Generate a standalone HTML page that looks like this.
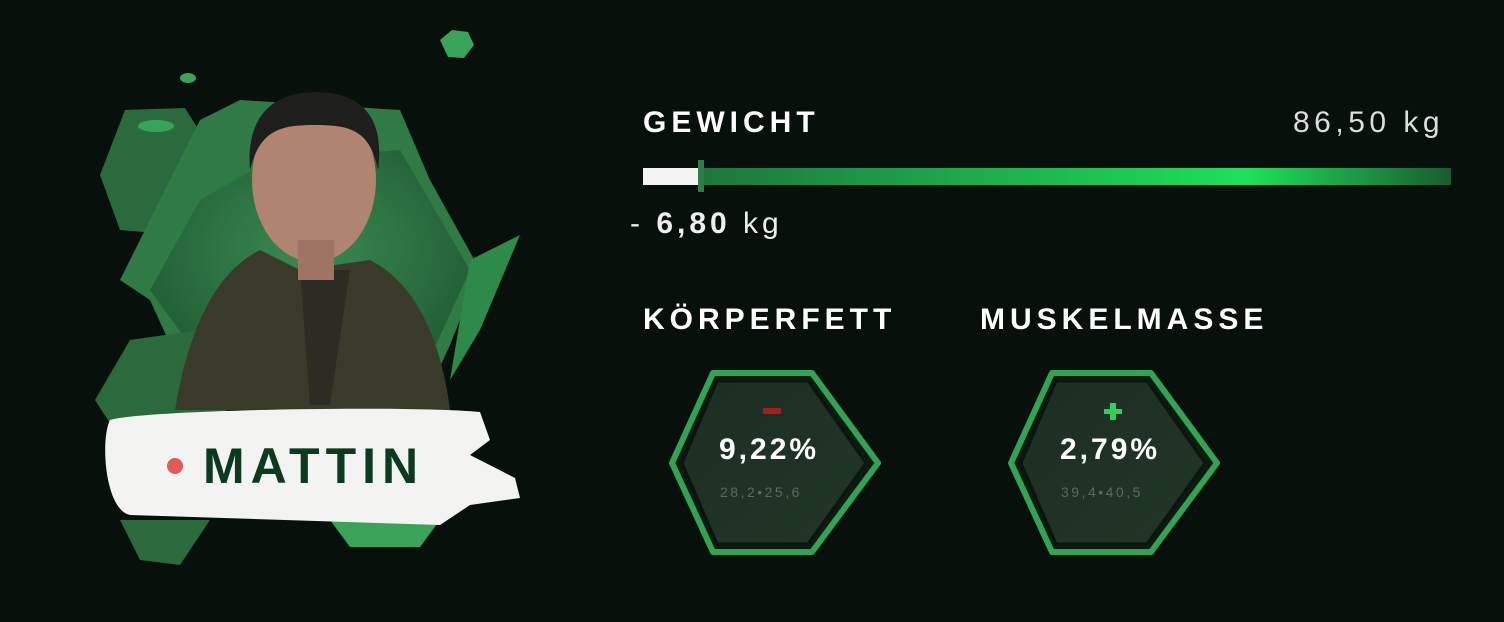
<!DOCTYPE html>
<html><head><meta charset="utf-8"><style>
body{margin:0;width:1504px;height:622px;background:#07100b;overflow:hidden;position:relative;font-family:"Liberation Sans",sans-serif}
.t{position:absolute;color:#fff;font-weight:bold;letter-spacing:2px;white-space:nowrap}
</style></head><body>
<svg width="1504" height="622" style="position:absolute;left:0;top:0">
<defs>
<linearGradient id="bar" x1="0" x2="1"><stop offset="0" stop-color="#1e6a3a"/><stop offset="0.75" stop-color="#1ee05a"/><stop offset="1" stop-color="#1a5a30"/></linearGradient>
<radialGradient id="bg" cx="0.5" cy="0.4" r="0.6"><stop offset="0" stop-color="#3a8a52"/><stop offset="1" stop-color="#1f5a33"/></radialGradient>
<linearGradient id="hx" x1="0" y1="0" x2="1" y2="1"><stop offset="0" stop-color="#1c2e22"/><stop offset="1" stop-color="#223628"/></linearGradient>
</defs>
<polygon points="100,175 125,110 185,108 205,140 180,235 120,230" fill="#2a6a3c"/>
<polygon points="200,120 240,100 400,110 430,180 480,270 450,345 420,410 200,410 150,300 120,280 160,200" fill="#2f7a45"/>
<polygon points="150,290 200,200 270,160 400,150 470,270 420,380 230,400" fill="url(#bg)"/>
<polygon points="95,400 130,340 200,330 230,400 200,480 140,470" fill="#2a6a3c"/>
<polygon points="120,520 140,560 180,565 210,520" fill="#2a6a3c"/>
<polygon points="330,520 350,547 420,547 440,520" fill="#3aa35a"/>
<polygon points="470,260 520,235 480,330 450,380" fill="#2e8a48"/>
<polygon points="440,40 452,30 468,32 474,45 464,58 448,57" fill="#3aa35a"/>
<ellipse cx="188" cy="78" rx="8" ry="5" fill="#3aa35a"/>
<ellipse cx="156" cy="126" rx="18" ry="6" fill="#3aa35a"/>
<path d="M175,410 C190,320 220,270 260,250 L300,270 L370,260 C410,280 440,330 450,410 Z" fill="#3a3a2a"/>
<path d="M300,270 L310,405 L330,405 L350,270 Z" fill="#2c2c22"/>
<ellipse cx="314" cy="180" rx="62" ry="82" fill="#b08470"/>
<path d="M250,170 C245,110 280,92 315,92 C360,92 385,115 378,170 C370,130 350,125 315,125 C280,125 260,130 250,170Z" fill="#1e1e1c"/>
<rect x="298" y="240" width="36" height="40" fill="#a07464"/>
<path d="M110,420 C140,410 400,405 480,412 L490,440 L470,455 L515,478 L520,498 L470,505 L440,525 L130,515 C105,510 100,440 110,420Z" fill="#f3f3f1"/>
<circle cx="175" cy="466" r="8" fill="#e05a5a"/>
<rect x="643" y="168" width="808" height="17" fill="url(#bar)"/>
<rect x="643" y="168" width="55" height="17" fill="#f4f4f4"/>
<rect x="698" y="160" width="6" height="32" fill="#2e7a48"/>
<polygon points="713,373 812,373 878,463 812,552 713,552 672,463" fill="#0c1a10" stroke="#32a355" stroke-width="6" stroke-linejoin="round"/>
<polygon points="717,381 808,381 866,463 808,544 717,544 682,463" fill="url(#hx)" stroke="#0b150f" stroke-width="3"/>
<polygon points="1052,373 1151,373 1217,463 1151,552 1052,552 1011,463" fill="#0c1a10" stroke="#32a355" stroke-width="6" stroke-linejoin="round"/>
<polygon points="1056,381 1147,381 1205,463 1147,544 1056,544 1021,463" fill="url(#hx)" stroke="#0b150f" stroke-width="3"/>
<rect x="763" y="408" width="18" height="6" fill="#a02020"/>
<rect x="1104" y="409" width="18" height="5" fill="#2ed05a"/>
<rect x="1110" y="403" width="6" height="17" fill="#2ed05a"/>
</svg>
<div class="t" style="left:203px;top:437px;font-size:50px;color:#0c3a1e;letter-spacing:6px">MATTIN</div>
<div class="t" style="left:643px;top:106px;font-size:30px;letter-spacing:5px">GEWICHT</div>
<div class="t" style="left:1293px;top:106px;font-size:30px;font-weight:normal;color:#ddd;letter-spacing:4.5px">86,50 kg</div>
<div class="t" style="left:630px;top:207px;font-size:30px;font-weight:normal;color:#eee;letter-spacing:4px">- <b>6,80</b> kg</div>
<div class="t" style="left:643px;top:303px;font-size:30px;letter-spacing:5px">KÖRPERFETT</div>
<div class="t" style="left:980px;top:303px;font-size:30px;letter-spacing:5px">MUSKELMASSE</div>
<div class="t" style="left:719px;top:433px;font-size:30px;letter-spacing:3px">9,22%</div>
<div class="t" style="left:720px;top:484px;font-size:14px;font-weight:normal;color:#5a6a5e;letter-spacing:2.5px">28,2•25,6</div>
<div class="t" style="left:1060px;top:433px;font-size:30px;letter-spacing:3px">2,79%</div>
<div class="t" style="left:1061px;top:484px;font-size:14px;font-weight:normal;color:#5a6a5e;letter-spacing:2.5px">39,4•40,5</div>
</body></html>
